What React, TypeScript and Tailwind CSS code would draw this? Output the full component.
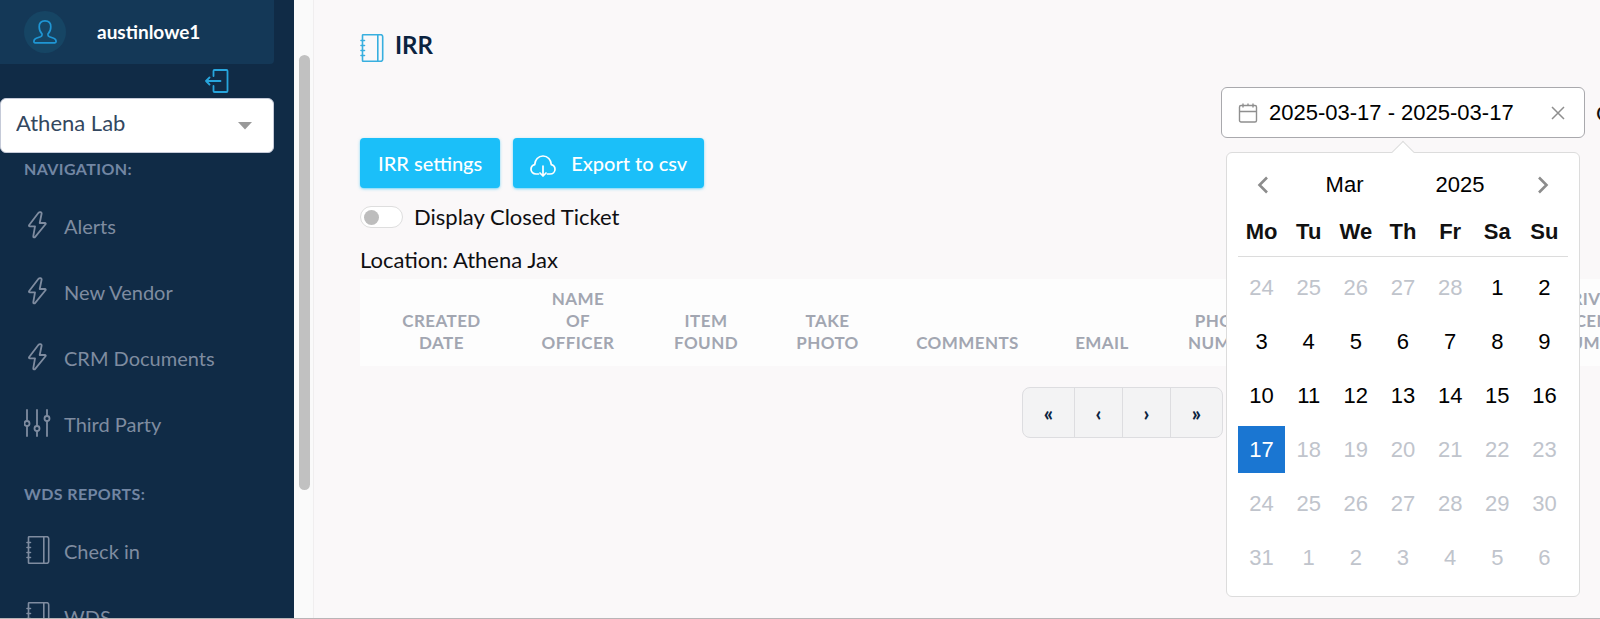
import { useState } from "react";

const locations = ["Athena Lab"];

const columns = [
  { label: "Created Date", width: "w-[151px]", pad: "pl-[41px] pr-[29px]" },
  { label: "Name Of Officer", width: "w-[134px]", pad: "px-7" },
  { label: "Item Found", width: "w-[122px]", pad: "px-7" },
  { label: "Take Photo", width: "w-[121px]", pad: "px-7" },
  { label: "Comments", width: "w-[159px]", pad: "px-6" },
  { label: "Email", width: "w-[110px]", pad: "px-5" },
  { label: "Phone Number", width: "w-[138px]", pad: "px-6" },
  { label: "", width: "w-[231px]", pad: "px-6" },
  { label: "Drivers License Number", width: "w-[138px]", pad: "px-6" },
];

const weekDays = ["Mo", "Tu", "We", "Th", "Fr", "Sa", "Su"];
const TODAY = 17;

// March 2025, padded with the end of February and the start of April
const weeks = Array.from({ length: 6 }, (_, week) =>
  Array.from({ length: 7 }, (_, day) => {
    const n = week * 7 + day - 4;
    if (n < 1) return { day: 28 + n, disabled: true, selected: false };
    if (n > 31) return { day: n - 31, disabled: true, selected: false };
    return { day: n, disabled: n > TODAY, selected: n === TODAY };
  })
);

function BoltIcon() {
  return (
    <svg viewBox="0 0 28 28" className="h-7 w-7" fill="none" stroke="currentColor" strokeWidth="1.8" strokeLinejoin="round" strokeLinecap="round">
      <path d="M14.500 1.800 5.200 14c-.5.7-.2 1.300.5 1.300h5.300L9.300 25.200c-.1 1.300 1.200 1.600 1.900.7l10.300-12.600c.5-.7.2-1.300-.6-1.300h-5.200L17.600 2.700c.3-1.500-2-2.200-3.100-.9z" />
    </svg>
  );
}

function SlidersIcon() {
  return (
    <svg viewBox="0 0 28 28" className="h-7 w-7" fill="none" stroke="currentColor" strokeWidth="1.8" strokeLinecap="round">
      <path d="M3 1v10.500M3 17.500V27M13 1v15.500M13 22.500V27M23 1v5.500M23 12.500V27" />
      <circle cx="3" cy="14.500" r="2.500" />
      <circle cx="13" cy="19.500" r="2.500" />
      <circle cx="23" cy="9.500" r="2.500" />
    </svg>
  );
}

function NotebookIcon() {
  return (
    <svg viewBox="0 0 28 28" className="h-7 w-7" fill="none" stroke="currentColor" strokeWidth="1.6" strokeLinecap="round" strokeLinejoin="round">
      <path d="M4.500 3V1.500c0-.5.3-.8.8-.8h17.400c1.200 0 2 .8 2 2v22.600c0 1.200-.8 2-2 2H5.300c-.5 0-.8-.3-.8-.8V25M4.500 3v22M19.800.7v26.600" />
      <path d="M3 6.500h3.500M3 11.500h3.500M3 16.500h3.500M3 21.500h3.500" />
    </svg>
  );
}

function UserIcon() {
  return (
    <svg viewBox="0 0 24 24" className="h-6 w-6" fill="none" stroke="currentColor" strokeWidth="1.700" strokeLinejoin="round">
      <path d="M9 15v-1.200C7.300 12.400 6.200 10 6.200 6.800 6.200 3 8.500.9 12 .9s5.800 2.100 5.800 5.900c0 3.200-1.100 5.600-2.800 7V15c0 1 .5 1.400 1.500 1.800l4.200 1.500c1.600.6 2.400 1.800 2.400 3.200 0 .8-.4 1.300-1.200 1.300H2.100c-.8 0-1.200-.5-1.200-1.300 0-1.400.8-2.600 2.400-3.200l4.200-1.500C8.500 16.400 9 16 9 15z" />
    </svg>
  );
}

function LogoutIcon() {
  return (
    <svg viewBox="0 0 24 24" className="h-6 w-6" fill="none" stroke="currentColor" strokeWidth="1.800" strokeLinecap="round" strokeLinejoin="round">
      <path d="M8.500 7V2c0-.6.4-1 1-1h12c.6 0 1 .4 1 1v20c0 .6-.4 1-1 1h-12c-.6 0-1-.4-1-1v-5" />
      <path d="M15.500 12H1M4.500 8.500 1 12l3.500 3.500" />
    </svg>
  );
}

function CloudIcon() {
  return (
    <svg viewBox="0 0 26 22" className="h-[22px] w-[26px]" fill="none" stroke="currentColor" strokeWidth="1.700" strokeLinecap="round" strokeLinejoin="round">
      <path d="M8.500 19H6c-2.900 0-5-2-5-4.800 0-2.300 1.500-4 3.700-4.600C4.900 4.700 8.300 1 13 1s8.100 3.700 8.300 8.600c2.200.6 3.700 2.300 3.700 4.600 0 2.800-2.100 4.800-5 4.800h-2.500" />
      <path d="M13 11v10M10 18l3 3 3-3" />
    </svg>
  );
}

function CalendarIcon() {
  return (
    <svg viewBox="0 0 20 20" className="h-5 w-5 shrink-0" fill="none" stroke="currentColor" strokeWidth="1.400">
      <rect x="1.500" y="2.500" width="17" height="16.500" rx="1.500" />
      <path d="M1.500 8.500h17M5 .5v4M15 .5v4" />
      <path d="M10 .5v2" />
    </svg>
  );
}

function NavItem({ label, icon: Icon }: { label: string; icon: () => React.ReactNode }) {
  return (
    <li>
      <a href="#" className="flex h-[66px] items-center gap-3 pl-6 text-xl text-[#7f8ca0]">
        <Icon />
        <span className="pt-0.5">{label}</span>
      </a>
    </li>
  );
}

function NavHeading({ children }: { children: string }) {
  return (
    <h2 className="pl-6 text-base font-bold leading-8 tracking-wide text-[#7286a3] uppercase">
      {children}
    </h2>
  );
}

function Sidebar() {
  return (
    <aside className="flex h-full w-[294px] shrink-0 flex-col overflow-hidden bg-[#102b46]">
      <div className="mr-5 flex h-16 shrink-0 items-center gap-[31px] rounded-br bg-[#143857] pl-6">
        <span className="flex h-[42px] w-[42px] items-center justify-center rounded-full bg-[#164564] text-[#1f96d4]">
          <UserIcon />
        </span>
        <span className="text-[19px] font-bold text-white">austinlowe1</span>
      </div>
      <div className="mr-[65px] flex h-[34px] shrink-0 items-center justify-end text-[#27a5dc]">
        <button type="button" aria-label="Log out">
          <LogoutIcon />
        </button>
      </div>
      <div className="relative mr-5 shrink-0">
        <select
          aria-label="Location"
          className="h-[55px] w-full appearance-none rounded-md border border-[#c5cad8] bg-white pb-1.5 pl-[15px] text-[22px] text-[#33475f]"
        >
          {locations.map((location) => (
            <option key={location}>{location}</option>
          ))}
        </select>
        <svg viewBox="0 0 14 8" className="pointer-events-none absolute top-6 right-[22px] h-2 w-3.5 fill-[#999]">
          <path d="M0 0h14L7 7.500z" />
        </svg>
      </div>
      <nav className="shrink-0">
        <NavHeading>Navigation:</NavHeading>
        <ul className="pt-[7px]">
          <NavItem label="Alerts" icon={BoltIcon} />
          <NavItem label="New Vendor" icon={BoltIcon} />
          <NavItem label="CRM Documents" icon={BoltIcon} />
          <NavItem label="Third Party" icon={SlidersIcon} />
        </ul>
        <div className="pt-[22px]">
          <NavHeading>WDS Reports:</NavHeading>
        </div>
        <ul className="pt-[7px]">
          <NavItem label="Check in" icon={NotebookIcon} />
          <NavItem label="WDS" icon={NotebookIcon} />
        </ul>
      </nav>
    </aside>
  );
}

function Chevron({ flip = false }: { flip?: boolean }) {
  return (
    <svg viewBox="0 0 12 18" className={`h-[18px] w-3 ${flip ? "rotate-180" : ""}`} fill="none" stroke="#8c8c8c" strokeWidth="2.600">
      <path d="M10 1.500 2.500 9l7.500 7.500" />
    </svg>
  );
}

function CalendarPopup() {
  return (
    <div className="absolute top-full right-[5px] left-[5px] z-10 mt-[14px] rounded-md border border-[#dcdcdc] bg-white px-[11px] pb-[15px] text-[22px] text-black">
      <span className="absolute -top-[9px] left-1/2 h-4 w-4 -translate-x-1/2 rotate-45 border-t border-l border-[#dcdcdc] bg-white" />
      <div className="flex h-[63px] items-center justify-between px-[19px]">
        <button type="button" aria-label="Previous month">
          <Chevron />
        </button>
        <div className="flex gap-[72px] pl-1">
          <button type="button">Mar</button>
          <button type="button">2025</button>
        </div>
        <button type="button" aria-label="Next month">
          <Chevron flip />
        </button>
      </div>
      <table className="w-full table-fixed border-collapse text-center">
        <thead>
          <tr className="border-b border-[#dcdcdc]">
            {weekDays.map((day) => (
              <th key={day} className="h-10 p-0 pb-[7px] leading-8 font-bold text-[#111]">
                {day}
              </th>
            ))}
          </tr>
        </thead>
        <tbody>
          {weeks.map((week, i) => (
            <tr key={i}>
              {week.map(({ day, disabled, selected }) => (
                <td key={day} className="h-[54px] p-0 pt-[7px]">
                  <button
                    type="button"
                    disabled={disabled}
                    className={`block h-[47px] w-full ${
                      selected ? "bg-[#1a76d2] text-white" : disabled ? "text-[#c0c4cc]" : "text-black"
                    }`}
                  >
                    {day}
                  </button>
                </td>
              ))}
            </tr>
          ))}
        </tbody>
      </table>
    </div>
  );
}

function DateRangePicker() {
  const [range, setRange] = useState("2025-03-17 - 2025-03-17");

  return (
    <div className="relative w-[364px] shrink-0 font-['Liberation_Sans',sans-serif]">
      <div className="flex h-[51px] items-center rounded-md border border-[#a9a9ad] bg-white px-4 text-[#8f8f8f]">
        <CalendarIcon />
        <input
          aria-label="Date range"
          value={range}
          onChange={(e) => setRange(e.target.value)}
          className="ml-[11px] min-w-0 flex-1 text-[22px] text-black outline-none"
        />
        <button type="button" aria-label="Clear" className="mr-[3px]" onClick={() => setRange("")}>
          <svg viewBox="0 0 14 14" className="h-3.5 w-3.5" stroke="currentColor" strokeWidth="1.500">
            <path d="m1 1 12 12M13 1 1 13" />
          </svg>
        </button>
      </div>
      <CalendarPopup />
    </div>
  );
}

export default function App() {
  return (
    <div className="flex h-screen overflow-hidden border-b border-[#b9b5b7] bg-[#faf8f9] font-[Lato,sans-serif] text-[#0f0f12]">
      <Sidebar />
      <div className="w-5 shrink-0 border-r border-[#f0eeef] bg-[#fafafa] px-[5px] pt-[55px]">
        <div className="h-[435px] w-[11px] rounded-full bg-[#c1c1c1]" />
      </div>

      <main className="min-w-0 flex-1 overflow-hidden pl-[46px]">
        <header className="flex h-[87px] items-start gap-[9px] pt-[29px]">
          <span className="-ml-0.5 pt-[5px] text-[#38afdf]">
            <NotebookIcon />
          </span>
          <h1 className="text-2xl font-bold text-[#0b2340]">IRR</h1>
        </header>

        <div className="flex h-[51px] items-center justify-end gap-[11px]">
          <DateRangePicker />
          <div className="w-1 shrink-0 overflow-visible text-[22px] whitespace-nowrap">Officer</div>
        </div>

        <div className="flex gap-[13px]">
          <button type="button" className="h-[50px] rounded bg-[#1bbff9] px-[18px] text-xl font-medium text-white shadow-sm shadow-[#1bbff9]/50">
            IRR settings
          </button>
          <button type="button" className="flex h-[50px] items-center gap-[15px] rounded bg-[#1bbff9] px-[17px] text-xl font-medium text-white shadow-sm shadow-[#1bbff9]/50">
            <span className="pt-1.5">
              <CloudIcon />
            </span>
            <span>Export to csv</span>
          </button>
        </div>

        <label className="flex h-[58px] w-fit items-center gap-[11px] text-[22px]">
          <input type="checkbox" className="peer sr-only" />
          <span className="flex h-[22px] w-[43px] items-center rounded-full border border-[#dedede] bg-white px-[3px] peer-checked:justify-end">
            <span className="h-[15px] w-[15px] rounded-full bg-[#bdbdbd]" />
          </span>
          <span className="pb-0.5">Display Closed Ticket</span>
        </label>
        <p className="h-[33px] text-[22px] leading-7">Location: Athena Jax</p>

        <table className="w-[1304px] table-fixed bg-[#fdfdfd] text-[17px] text-[#a2a6b1]">
          <thead>
            <tr>
              {columns.map(({ label, width, pad }) => (
                <th key={label} className={`h-[87px] pb-3 align-bottom leading-[22px] font-bold tracking-wide uppercase ${width} ${pad}`}>
                  {label}
                </th>
              ))}
            </tr>
          </thead>
        </table>

        <div className="flex justify-end pt-[21px] pr-[377px]">
          <div className="flex h-[51px] divide-x divide-[#dddde0] rounded-lg border border-[#dddde0] bg-[#f3f3f4] text-xl font-black text-[#0b2340]">
            <button type="button" aria-label="First page" className="w-[52px]">«</button>
            <button type="button" aria-label="Previous page" className="w-12">‹</button>
            <button type="button" aria-label="Next page" className="w-12">›</button>
            <button type="button" aria-label="Last page" className="w-[51px]">»</button>
          </div>
        </div>
      </main>
    </div>
  );
}
